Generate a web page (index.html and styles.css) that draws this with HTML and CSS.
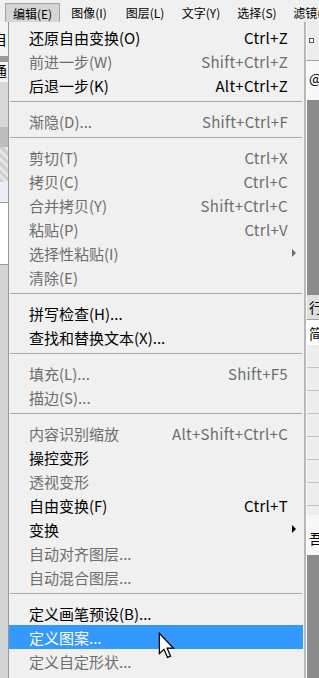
FILE: index.html
```html
<!DOCTYPE html>
<html lang="zh-CN">
<head>
<meta charset="utf-8">
<title>编辑菜单</title>
<link rel="stylesheet" href="styles.css">
</head>
<body>
<div class="menubar">
  <div class="mb-item active">编辑(E)</div>
  <div class="mb-item">图像(I)</div>
  <div class="mb-item">图层(L)</div>
  <div class="mb-item">文字(Y)</div>
  <div class="mb-item">选择(S)</div>
  <div class="mb-item">滤镜(T)</div>
</div>
<div class="stage">
  <div class="side left">
    <div class="blk l1"><span class="peek">自</span></div>
    <div class="blk l2"></div>
    <div class="blk l3"><span class="peek">通</span></div>
    <div class="blk l4"></div>
    <div class="blk l5"></div>
    <div class="blk l6"></div>
    <div class="blk l7"></div>
    <div class="blk l8"></div>
    <div class="blk l9"></div>
  </div>
  <div class="menu">
    <div class="item"><span class="label">还原自由变换(O)</span><span class="key">Ctrl+Z</span></div>
    <div class="item off"><span class="label">前进一步(W)</span><span class="key">Shift+Ctrl+Z</span></div>
    <div class="item"><span class="label">后退一步(K)</span><span class="key">Alt+Ctrl+Z</span></div>
    <div class="sep"></div>
    <div class="item off"><span class="label">渐隐(D)...</span><span class="key">Shift+Ctrl+F</span></div>
    <div class="sep"></div>
    <div class="item off"><span class="label">剪切(T)</span><span class="key">Ctrl+X</span></div>
    <div class="item off"><span class="label">拷贝(C)</span><span class="key">Ctrl+C</span></div>
    <div class="item off"><span class="label">合并拷贝(Y)</span><span class="key">Shift+Ctrl+C</span></div>
    <div class="item off"><span class="label">粘贴(P)</span><span class="key">Ctrl+V</span></div>
    <div class="item off"><span class="label">选择性粘贴(I)</span><span class="arrow"></span></div>
    <div class="item off"><span class="label">清除(E)</span></div>
    <div class="sep"></div>
    <div class="item"><span class="label">拼写检查(H)...</span></div>
    <div class="item"><span class="label">查找和替换文本(X)...</span></div>
    <div class="sep"></div>
    <div class="item off"><span class="label">填充(L)...</span><span class="key">Shift+F5</span></div>
    <div class="item off"><span class="label">描边(S)...</span></div>
    <div class="sep"></div>
    <div class="item off"><span class="label">内容识别缩放</span><span class="key">Alt+Shift+Ctrl+C</span></div>
    <div class="item"><span class="label">操控变形</span></div>
    <div class="item off"><span class="label">透视变形</span></div>
    <div class="item"><span class="label">自由变换(F)</span><span class="key">Ctrl+T</span></div>
    <div class="item"><span class="label">变换</span><span class="arrow"></span></div>
    <div class="item off"><span class="label">自动对齐图层...</span></div>
    <div class="item off"><span class="label">自动混合图层...</span></div>
    <div class="sep"></div>
    <div class="item"><span class="label">定义画笔预设(B)...</span></div>
    <div class="item hot"><span class="label">定义图案...</span></div>
    <div class="item off"><span class="label">定义自定形状...</span></div>
    <svg class="cursor" width="18" height="28" viewBox="0 0 14 22">
      <path d="M1 1 L1 17 L4.6 13.6 L7.4 20 L9.8 19 L7.1 12.7 L12 12.7 Z" fill="#fff" stroke="#000" stroke-width="1" stroke-linejoin="miter"/>
    </svg>
  </div>
  <div class="side right">
    <div class="blk r1"><span class="slider"></span></div>
    <div class="blk r2"><span class="peek">@</span></div>
    <div class="blk r3"></div>
    <div class="blk r4"><span class="peek">行</span></div>
    <div class="blk r5"><span class="peek">简</span></div>
    <div class="blk r6"></div>
    <div class="blk r7"><span class="peek">吾</span></div>
    <div class="blk r8"></div>
  </div>
</div>
</body>
</html>
```

FILE: styles.css
```css
* { box-sizing: border-box; }
html, body {
  margin: 0;
  padding: 0;
  width: 319px;
  height: 678px;
  overflow: hidden;
  background: #f0f0f0;
  font-family: "Noto Sans CJK SC", "Noto Sans", sans-serif;
}
.menubar {
  height: 22px;
  display: flex;
  padding-left: 5px;
  background: #f0f0f0;
  font-size: 12px;
  color: #000;
}
.mb-item {
  width: 56px;
  flex: none;
  display: flex;
  align-items: center;
  justify-content: center;
  margin-top: 3px;
  height: 19px;
  white-space: nowrap;
}
.mb-item.active {
  background: #d6d6d6;
  border: 1px solid #a3a3a3;
  border-bottom: 0;
  width: 55px;
  margin-right: 1px;
}
.stage {
  display: flex;
  height: 656px;
}
.side {
  display: flex;
  flex-direction: column;
  overflow: hidden;
}
.side.left { width: 8px; flex: none; }
.side.right { flex: 1; }
.blk { flex: none; position: relative; overflow: hidden; }
.peek {
  display: block;
  font-size: 15px;
  line-height: 18px;
  color: #000;
  white-space: nowrap;
}
.left .peek { margin-left: -8px; }
.l1 { height: 34px; background: #f4f4f4; padding-top: 8px; }
.l2 { height: 6px; background: #9a9a9a; }
.l3 { height: 20px; background: #f4f4f4; }
.l4 { height: 45px; background: #d8d8d8; }
.l5 { height: 20px; background: #bdbdbd; }
.l6 { height: 35px; background: repeating-linear-gradient(45deg, #cfcfcf 0 3px, #e6e6e6 3px 6px); }
.l7 { height: 20px; background: #e9eef8; }
.l8 { height: 62px; background: #ffffff; border-top: 1px solid #9a9a9a; }
.l9 { height: 414px; background: #d4d4d4; border-top: 1px solid #9a9a9a; }

.right .blk { border-left: 1px solid #fdfdfd; }
.right .peek { margin-left: 2px; font-size: 14px; }
.slider {
  display: block;
  margin: 16px 0 0 2px;
  width: 5px;
  height: 5px;
  border: 1px solid #555;
  background: #fff;
}
.r1 { height: 38px; background: #ececec; }
.r2 { height: 40px; background: #f7f7f7; border-top: 1px solid #a0a0a0; padding-top: 8px; }
.r3 { height: 195px; background: #8b8b8b; }
.r4 { height: 24px; background: #dedede; padding-top: 3px; }
.r5 { height: 26px; background: #ffffff; border-top: 1px solid #a0a0a0; padding-top: 4px; }
.r6 { height: 170px; background: #ededed; background-image: repeating-linear-gradient(180deg, transparent 0 22px, #c2c2c2 22px 23px); }
.r7 { height: 40px; background: #f7f7f7; padding-top: 14px; }
.r8 { height: 123px; background: #8b8b8b; }

.menu {
  width: 298px;
  flex: none;
  position: relative;
  background: #f0f0f0;
  border-left: 1px solid #979797;
  border-right: 2px solid #b8b8b8;
  padding-top: 3px;
  font-size: 15px;
  color: #000;
}
.item {
  height: 24px;
  display: flex;
  align-items: center;
  padding-left: 20px;
  padding-right: 16px;
  white-space: nowrap;
  position: relative;
}
.item .label { flex: 1; }
.item .key { flex: none; letter-spacing: 0.3px; }
.item.off { color: #6d6d6d; }
.item.hot { background: #3399ff; color: #fff; margin-right: 1px; }
.arrow {
  position: absolute;
  right: 8px;
  top: 8px;
  width: 0;
  height: 0;
  border-top: 4px solid transparent;
  border-bottom: 4px solid transparent;
  border-left: 4px solid #000;
}
.item.off .arrow { border-left-color: #6d6d6d; }
.sep {
  height: 12px;
  display: flex;
  align-items: center;
  padding-left: 1px;
  padding-right: 2px;
}
.sep::before {
  content: "";
  display: block;
  width: 100%;
  height: 1px;
  background: #a9a9a9;
  margin-top: -4px;
}
.cursor {
  position: absolute;
  left: 149px;
  top: 610px;
}
```
